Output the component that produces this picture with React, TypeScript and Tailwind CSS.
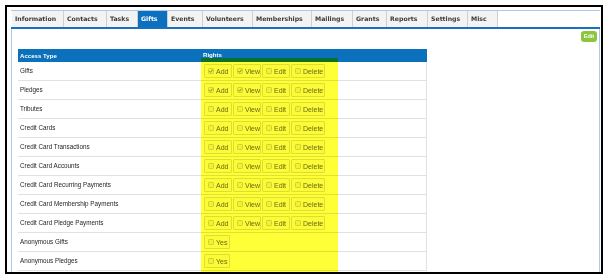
import React from "react";

const tabs: [string, string][] = [
  ["Information", "w-[52px]"],
  ["Contacts", "w-[43px]"],
  ["Tasks", "w-[31px]"],
  ["Gifts", "w-[30px]"],
  ["Events", "w-[35px]"],
  ["Volunteers", "w-[50px]"],
  ["Memberships", "w-[59px]"],
  ["Mailings", "w-[41px]"],
  ["Grants", "w-[34px]"],
  ["Reports", "w-[41px]"],
  ["Settings", "w-[40px]"],
  ["Misc", "w-[30px]"],
];

type Row = { label: string; kind: "crud" | "yes"; checked: string[] };

const rows: Row[] = [
  { label: "Gifts", kind: "crud", checked: ["Add", "View"] },
  { label: "Pledges", kind: "crud", checked: ["Add", "View"] },
  { label: "Tributes", kind: "crud", checked: [] },
  { label: "Credit Cards", kind: "crud", checked: [] },
  { label: "Credit Card Transactions", kind: "crud", checked: [] },
  { label: "Credit Card Accounts", kind: "crud", checked: [] },
  { label: "Credit Card Recurring Payments", kind: "crud", checked: [] },
  { label: "Credit Card Membership Payments", kind: "crud", checked: [] },
  { label: "Credit Card Pledge Payments", kind: "crud", checked: [] },
  { label: "Anonymous Gifts", kind: "yes", checked: [] },
  { label: "Anonymous Pledges", kind: "yes", checked: [] },
];

const crud: [string, string][] = [
  ["Add", "w-[28px]"],
  ["View", "w-[28px]"],
  ["Edit", "w-[28px]"],
  ["Delete", "w-[34px]"],
];

function Check({ on }: { on: boolean }) {
  return (
    <svg width="6" height="6" viewBox="0 0 6 6" className="shrink-0 -mt-[1px]">
      <rect x="0.5" y="0.5" width="5" height="5" rx="0.8" fill="#f2f2f2" stroke="#cfcfcf" strokeWidth="1" />
      {on && <path d="M1.3 3.1 L2.5 4.3 L4.8 1.6" fill="none" stroke="#8a8a8a" strokeWidth="1" />}
    </svg>
  );
}

function Opt({ label, w, on }: { label: string; w: string; on: boolean }) {
  return (
    <div
      className={`${w} h-[14px] flex items-center gap-[2px] pl-[3px] border border-[#dedede] bg-[#fbfbfb] rounded-[1px] text-[7px] text-[#6a6a6a] overflow-hidden whitespace-nowrap`}
    >
      <Check on={on} />
      <span className="leading-none">{label}</span>
    </div>
  );
}

export default function App() {
  return (
    <div className="relative w-[610px] h-[278px] bg-white overflow-hidden" style={{ fontFamily: '"Liberation Sans", Arial, sans-serif' }}>
      <div className="absolute left-[5px] top-[5px] w-[598px] h-[269px] border-2 border-black bg-white">
        <div className="ml-[4px] mr-[1px] mt-[3px] h-[262px] flex flex-col">
          {/* top line */}
          <div className="h-[1px] bg-[#a9cbe9]" />
          {/* tabs */}
          <div className="flex h-[16px] pl-[1px]" style={{ fontFamily: '"DejaVu Sans", Verdana, sans-serif' }}>
            {tabs.map(([t, w]) => {
              const active = t === "Gifts";
              return (
                <div
                  key={t}
                  className={`${w} h-full flex items-center pl-[3px] border-r border-[#cfcfcf] text-[6.2px] font-bold ${
                    active ? "bg-[#0d70be] text-white" : "bg-[#f3f3f3] text-[#3a3a3a]"
                  }`}
                >
                  {t}
                </div>
              );
            })}
          </div>
          <div className="h-[2px] bg-[#1672bf]" />
          {/* body */}
          <div className="flex-1 border-l border-r border-[#a9cbe9] flex flex-col">
            <div className="flex justify-end pt-[2px] pr-[2px]">
              <div className="w-[16px] h-[11px] rounded-[3px] bg-[#8cc63f] text-white text-[5.5px] font-bold flex items-center justify-center">
                Edit
              </div>
            </div>
            <div className="ml-[6px] mt-[7px] w-[409px]">
              <div className="flex h-[13px] bg-[#0b71bd] text-white text-[6.1px] font-bold">
                <div className="w-[183px] pl-[2px] flex items-center">Access Type</div>
                <div className="flex-1 pl-[2px] flex items-start pt-[1px]">Rights</div>
              </div>
              {rows.map((r) => (
                <div key={r.label} className="flex h-[19px] border-b border-[#e1e1e1]">
                  <div className="w-[183px] pl-[2px] flex items-center text-[6.3px] text-[#1e1e1e]">{r.label}</div>
                  <div className="flex-1 border-r border-[#e1e1e1] pl-[3px] flex items-center gap-[1px]">
                    {r.kind === "crud" ? (
                      crud.map(([l, w]) => <Opt key={l} label={l} w={w} on={r.checked.includes(l)} />)
                    ) : (
                      <Opt label="Yes" w="w-[26px]" on={false} />
                    )}
                  </div>
                </div>
              ))}
            </div>
          </div>
        </div>
      </div>
      {/* highlighter annotation */}
      <div className="absolute left-[201px] top-[58px] w-[137px] h-[214px] bg-[#ffff38] mix-blend-multiply pointer-events-none" />
    </div>
  );
}
